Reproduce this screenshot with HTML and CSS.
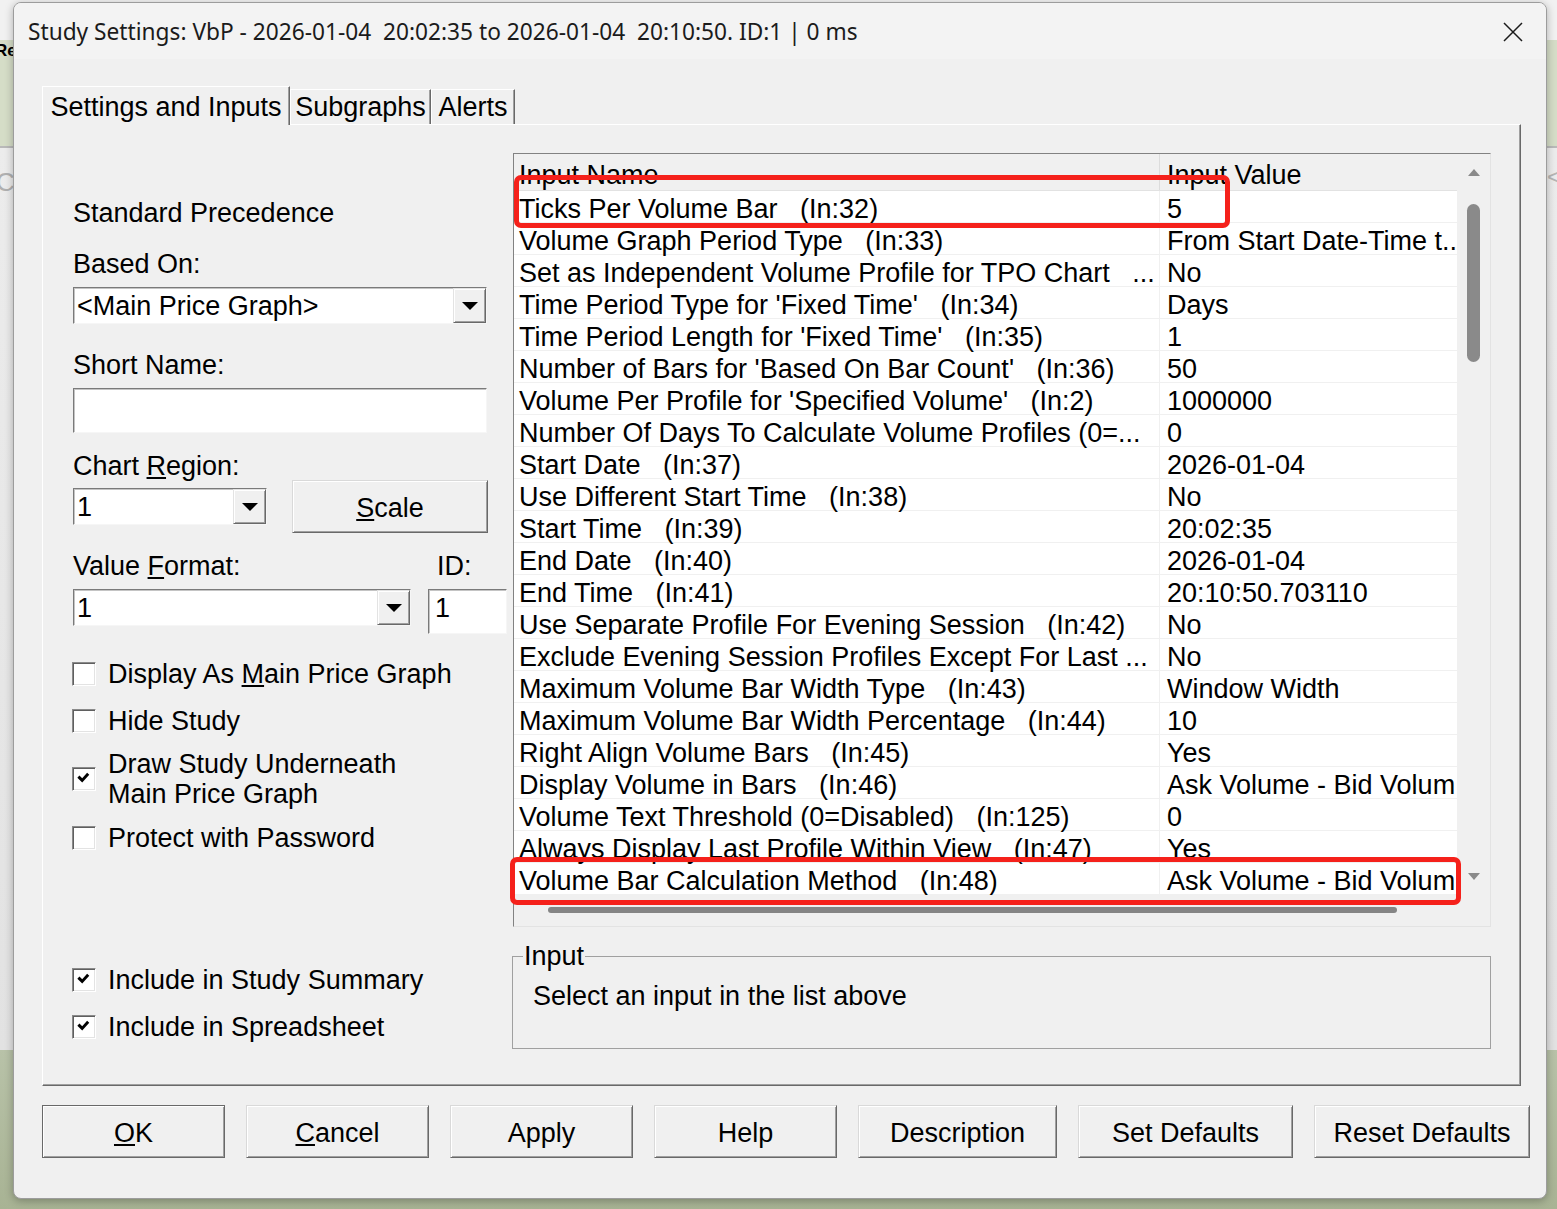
FILE: index.html
```html
<!DOCTYPE html>
<html lang="en">
<head>
<meta charset="utf-8">
<title>Study Settings</title>
<link rel="stylesheet" href="styles.css">
</head>
<body>
<div class="desk">
  <div class="strip strip-left"><span class="re">Re</span><span class="cc">C</span></div>
  <div class="strip strip-right"><span class="lt">&lt;</span></div>
</div>
<div class="dialog">
  <div class="titlebar">
    <span class="title">Study Settings: VbP - 2026-01-04  20:02:35 to 2026-01-04  20:10:50. ID:1 | 0 ms</span>
    <svg class="close" viewBox="0 0 20 20"><path d="M1 1L19 19M19 1L1 19"/></svg>
  </div>
  <div class="content">
    <div class="tabs">
      <div class="tab tab-sel w1">Settings and Inputs</div>
      <div class="tab w2">Subgraphs</div>
      <div class="tab w3">Alerts</div>
    </div>
    <div class="panel">
      <div class="leftcol">
        <div class="txt prec">Standard Precedence</div>
        <div class="txt lbl-based">Based On:</div>
        <div class="combo combo-based"><span class="ctext">&lt;Main Price Graph&gt;</span><span class="dd"><svg viewBox="0 0 16 8"><path d="M0 0H16L8 8Z"/></svg></span></div>
        <div class="txt lbl-short">Short Name:</div>
        <div class="edit edit-short"></div>
        <div class="txt lbl-region">Chart <u>R</u>egion:</div>
        <div class="region-row">
          <div class="combo combo-region"><span class="ctext">1</span><span class="dd"><svg viewBox="0 0 16 8"><path d="M0 0H16L8 8Z"/></svg></span></div>
          <div class="btn btn-scale"><span><u>S</u>cale</span></div>
        </div>
        <div class="fmt-labels"><span class="txt">Value <u>F</u>ormat:</span><span class="txt id-lbl">ID:</span></div>
        <div class="fmt-row">
          <div class="combo combo-fmt"><span class="ctext">1</span><span class="dd"><svg viewBox="0 0 16 8"><path d="M0 0H16L8 8Z"/></svg></span></div>
          <div class="edit edit-id"><span class="ctext">1</span></div>
        </div>
        <div class="check ck1"><span class="cb"></span><span class="txt">Display As <u>M</u>ain Price Graph</span></div>
        <div class="check ck2"><span class="cb"></span><span class="txt">Hide Study</span></div>
        <div class="check ck3"><span class="cb"><svg viewBox="0 0 24 24"><path d="M7 10.5 L10 13.5 L15.5 7.5"/></svg></span><span class="txt">Draw Study Underneath<br>Main Price Graph</span></div>
        <div class="check ck4"><span class="cb"></span><span class="txt">Protect with Password</span></div>
        <div class="check ck5"><span class="cb"><svg viewBox="0 0 24 24"><path d="M7 10.5 L10 13.5 L15.5 7.5"/></svg></span><span class="txt">Include in Study Summary</span></div>
        <div class="check ck6"><span class="cb"><svg viewBox="0 0 24 24"><path d="M7 10.5 L10 13.5 L15.5 7.5"/></svg></span><span class="txt">Include in Spreadsheet</span></div>
      </div>
      <div class="rightcol">
        <div class="list">
          <div class="data">
            <div class="hdr"><div class="c1">Input Name</div><div class="c2">Input Value</div></div>
            <div class="row"><div class="c1">Ticks Per Volume Bar   (In:32)</div><div class="c2">5</div></div>
            <div class="row"><div class="c1">Volume Graph Period Type   (In:33)</div><div class="c2">From Start Date-Time t..</div></div>
            <div class="row"><div class="c1">Set as Independent Volume Profile for TPO Chart   ...</div><div class="c2">No</div></div>
            <div class="row"><div class="c1">Time Period Type for 'Fixed Time'   (In:34)</div><div class="c2">Days</div></div>
            <div class="row"><div class="c1">Time Period Length for 'Fixed Time'   (In:35)</div><div class="c2">1</div></div>
            <div class="row"><div class="c1">Number of Bars for 'Based On Bar Count'   (In:36)</div><div class="c2">50</div></div>
            <div class="row"><div class="c1">Volume Per Profile for 'Specified Volume'   (In:2)</div><div class="c2">1000000</div></div>
            <div class="row"><div class="c1">Number Of Days To Calculate Volume Profiles (0=...</div><div class="c2">0</div></div>
            <div class="row"><div class="c1">Start Date   (In:37)</div><div class="c2">2026-01-04</div></div>
            <div class="row"><div class="c1">Use Different Start Time   (In:38)</div><div class="c2">No</div></div>
            <div class="row"><div class="c1">Start Time   (In:39)</div><div class="c2">20:02:35</div></div>
            <div class="row"><div class="c1">End Date   (In:40)</div><div class="c2">2026-01-04</div></div>
            <div class="row"><div class="c1">End Time   (In:41)</div><div class="c2">20:10:50.703110</div></div>
            <div class="row"><div class="c1">Use Separate Profile For Evening Session   (In:42)</div><div class="c2">No</div></div>
            <div class="row"><div class="c1">Exclude Evening Session Profiles Except For Last ...</div><div class="c2">No</div></div>
            <div class="row"><div class="c1">Maximum Volume Bar Width Type   (In:43)</div><div class="c2">Window Width</div></div>
            <div class="row"><div class="c1">Maximum Volume Bar Width Percentage   (In:44)</div><div class="c2">10</div></div>
            <div class="row"><div class="c1">Right Align Volume Bars   (In:45)</div><div class="c2">Yes</div></div>
            <div class="row"><div class="c1">Display Volume in Bars   (In:46)</div><div class="c2">Ask Volume - Bid Volum</div></div>
            <div class="row"><div class="c1">Volume Text Threshold (0=Disabled)   (In:125)</div><div class="c2">0</div></div>
            <div class="row"><div class="c1">Always Display Last Profile Within View   (In:47)</div><div class="c2">Yes</div></div>
            <div class="row"><div class="c1">Volume Bar Calculation Method   (In:48)</div><div class="c2">Ask Volume - Bid Volum</div></div>
          </div>
          <div class="vscroll">
            <svg viewBox="0 0 12 7"><path d="M0 7L6 0L12 7Z"/></svg>
            <div class="vthumb"></div>
            <svg viewBox="0 0 12 7"><path d="M0 0L12 0L6 7Z"/></svg>
          </div>
          <div class="hscroll"><div class="hthumb"></div></div>
          <div class="corner"></div>
          <div class="mark m1"></div>
          <div class="mark m2"></div>
        </div>
        <fieldset class="group">
          <legend>Input</legend>
          <div class="txt">Select an input in the list above</div>
        </fieldset>
      </div>
    </div>
    <div class="buttons">
      <div class="btn btn-def b183"><span><u>O</u>K</span></div>
      <div class="btn b183"><span><u>C</u>ancel</span></div>
      <div class="btn b183"><span>Apply</span></div>
      <div class="btn b183"><span>Help</span></div>
      <div class="btn b199"><span>Description</span></div>
      <div class="btn b215"><span>Set Defaults</span></div>
      <div class="btn b216"><span>Reset Defaults</span></div>
    </div>
  </div>
</div>
</body>
</html>
```

FILE: styles.css
```css
* { box-sizing: border-box; }
html, body { margin: 0; padding: 0; }
body {
  width: 1557px;
  height: 1209px;
  overflow: hidden;
  position: relative;
  font-family: "Liberation Sans", Arial, sans-serif;
  color: #000;
  background: linear-gradient(to bottom,
    #f1f1f1 0px, #f1f1f1 40px,
    #d5ddc7 40px, #d5ddc7 146px,
    #b9b9b9 146px, #b9b9b9 148px,
    #ececec 148px, #e2e2e2 1050px,
    #b8c2a8 1050px, #a8b394 1209px);
}

/* background application strips */
.desk { display: flex; justify-content: space-between; height: 1209px; }
.strip { display: flex; flex-direction: column; }
.strip-left { width: 13px; }
.strip-right { width: 10px; }
.re { margin-top: 41px; margin-left: -5px; font-size: 17px; font-weight: bold; line-height: 20px; white-space: nowrap; }
.cc { margin-top: 106px; margin-left: -4px; font-size: 26px; line-height: 30px; color: #b0b0b0; }
.lt { margin-top: 162px; font-size: 24px; line-height: 30px; color: #b5b5b5; }

/* dialog window */
.dialog {
  position: absolute;
  left: 13px;
  top: 2px;
  width: 1534px;
  height: 1197px;
  border: 1px solid #9c9c9c;
  border-radius: 8px;
  overflow: hidden;
  background: #f0f0f0;
  box-shadow: 0 2px 8px rgba(0, 0, 0, 0.28);
}
.titlebar {
  height: 56px;
  background: #f3f3f3;
  display: flex;
  align-items: center;
  justify-content: space-between;
  padding: 1px 23px 0 14px;
}
.title {
  font-family: "Noto Sans", "Open Sans", sans-serif;
  font-size: 22.7px;
  white-space: pre;
  color: #1b1b1b;
}
.close { width: 20px; height: 20px; fill: none; stroke: #1b1b1b; stroke-width: 1.5; }

.content { padding: 27px 16px 0 28px; }

/* tabs */
.tabs { display: flex; align-items: flex-end; height: 38px; }
.tab {
  font-size: 27px;
  line-height: 30px;
  height: 35px;
  padding-top: 2px;
  text-align: center;
  white-space: nowrap;
  border-top: 1px solid #fff;
  border-left: 1px solid #fff;
  border-right: 1px solid #696969;
  box-shadow: inset -1px 0 0 #a0a0a0;
}
.tab-sel {
  height: 39px;
  padding-top: 5px;
  margin-bottom: -1px;
  position: relative;
  z-index: 1;
  background: #f0f0f0;
}
.w1 { width: 248px; }
.w2 { width: 141px; }
.w3 { width: 84px; }

/* tab panel */
.panel {
  width: 1479px;
  height: 962px;
  display: flex;
  gap: 5px;
  padding-left: 30px;
  border-top: 1px solid #fff;
  border-left: 1px solid #fff;
  border-right: 1px solid #696969;
  border-bottom: 1px solid #696969;
  box-shadow: inset -1px -1px 0 #a0a0a0;
}
.leftcol { width: 434px; display: flex; flex-direction: column; align-items: flex-start; }
.rightcol { width: 979px; display: flex; flex-direction: column; }

.txt { font-size: 27px; line-height: 30px; white-space: pre; }
.txt u, .btn u { text-underline-offset: 2px; }

.prec { margin-top: 73px; }
.lbl-based { margin-top: 21px; }
.combo-based { margin-top: 8px; width: 414px; }
.lbl-short { margin-top: 26px; }
.edit-short { margin-top: 8px; width: 414px; height: 45px; }
.lbl-region { margin-top: 18px; }
.region-row { margin-top: -1px; display: flex; align-items: flex-start; }
.combo-region { margin-top: 8px; width: 194px; }
.btn-scale { margin-left: 25px; width: 196px; }
.fmt-labels { margin-top: 18px; display: grid; grid-template-columns: 355px 79px; }
.id-lbl { padding-left: 9px; }
.fmt-row { margin-top: 8px; display: flex; align-items: flex-start; }
.combo-fmt { width: 338px; }
.edit-id { width: 79px; margin-left: 17px; height: 45px; }
.edit-id .ctext { padding-left: 6px; }

/* combo boxes & edits */
.combo {
  display: flex;
  justify-content: space-between;
  height: 37px;
  background: #fff;
  border: 1px solid;
  border-color: #7a7a7a #f6f6f6 #f6f6f6 #7a7a7a;
  box-shadow: inset 1px 1px 0 #c4c4c4;
}
.ctext { font-size: 27px; line-height: 30px; padding: 3px 0 0 3px; white-space: pre; }
.dd {
  width: 33px;
  height: 35px;
  background: #f0f0f0;
  border: 1px solid;
  border-color: #e3e3e3 #696969 #696969 #e3e3e3;
  box-shadow: inset 1px 1px 0 #fff, inset -1px -1px 0 #a0a0a0;
  display: flex;
  align-items: center;
  justify-content: center;
}
.dd svg { width: 16px; height: 8px; fill: #000; }
.edit {
  display: block;
  background: #fff;
  border: 1px solid;
  border-color: #7a7a7a #f6f6f6 #f6f6f6 #7a7a7a;
  box-shadow: inset 1px 1px 0 #c4c4c4;
}
.edit-id .ctext { display: block; }

/* checkboxes */
.check { display: flex; align-items: center; }
.cb {
  width: 24px;
  height: 24px;
  margin-left: -1px;
  margin-right: 12px;
  background: #fff;
  border: 1px solid;
  border-color: #8a8a8a #fff #fff #8a8a8a;
  box-shadow: inset 1px 1px 0 #5f5f5f, inset -1px -1px 0 #e3e3e3;
  display: flex;
}
.cb svg { width: 22px; height: 22px; fill: none; stroke: #000; stroke-width: 3.2; stroke-linecap: square; }
.ck1 { margin-top: 25px; }
.ck2 { margin-top: 17px; }
.ck3 { margin-top: 13px; }
.ck4 { margin-top: 14px; }
.ck5 { margin-top: 112px; }
.ck6 { margin-top: 17px; }

/* buttons */
.btn {
  height: 53px;
  display: flex;
  align-items: center;
  justify-content: center;
  padding-top: 3px;
  font-size: 27px;
  line-height: 30px;
  white-space: pre;
  background: #f0f0f0;
  border: 1px solid;
  border-color: #d9d9d9 #696969 #696969 #d9d9d9;
  box-shadow: inset 1px 1px 0 #fff, inset -1px -1px 0 #a0a0a0;
}
.btn-def { border-color: #696969; }
.buttons { display: flex; gap: 21px; margin-top: 19px; }
.b183 { width: 183px; }
.b199 { width: 199px; }
.b215 { width: 215px; }
.b216 { width: 216px; }

/* list control */
.list {
  margin-top: 28px;
  margin-left: 1px;
  width: 978px;
  height: 774px;
  position: relative;
  display: grid;
  grid-template-columns: 943px 33px;
  grid-template-rows: 741px 31px;
  border: 1px solid;
  border-color: #828282 #e3e3e3 #e3e3e3 #828282;
}
.data { background: #fff; overflow: hidden; }
.hdr, .row { display: grid; grid-template-columns: 646px 297px; }
.hdr { height: 37px; background: #f0f0f0; border-bottom: 1px solid #e2e2e2; overflow: hidden; }
.row { height: 32px; border-bottom: 1px solid #f0f0f0; }
.c1, .c2 { font-size: 27px; white-space: pre; overflow-x: clip; overflow-y: visible; }
.c1 { padding-left: 5px; border-right: 1px solid #f0f0f0; }
.c2 { padding-left: 7px; }
.hdr .c1 { border-right-color: #dcdcdc; }
.hdr .c1, .hdr .c2 { padding-top: 6px; line-height: 30px; }
.row .c1, .row .c2 { padding-top: 3.5px; line-height: 28px; }

.vscroll {
  background: #f0f0f0;
  display: flex;
  flex-direction: column;
  align-items: center;
  padding: 15px 0;
}
.vscroll svg { width: 12px; height: 7px; fill: #8a8a8a; flex: none; }
.vthumb { width: 13px; height: 158px; border-radius: 7px; background: #8a8a8a; margin-top: 28px; margin-bottom: auto; }
.hscroll { background: #f0f0f0; padding: 12px 0 0 34px; }
.hthumb { width: 849px; height: 6px; border-radius: 3px; background: #858585; }
.corner { background: #f0f0f0; }

.mark { position: absolute; border: 5px solid #f5211b; border-radius: 7px; }
.m1 { left: 0; top: 21px; width: 716px; height: 53px; }
.m2 { left: -4px; top: 703px; width: 951px; height: 48px; }

/* group box */
.group {
  margin: 14px 0 0 0;
  padding: 10px 0 37px 10px;
  border: 1px solid #a0a0a0;
  min-width: 0;
}
.group legend { padding: 0 1px; font-size: 27px; line-height: 30px; }
.group .txt { margin-left: 10px; }
```
